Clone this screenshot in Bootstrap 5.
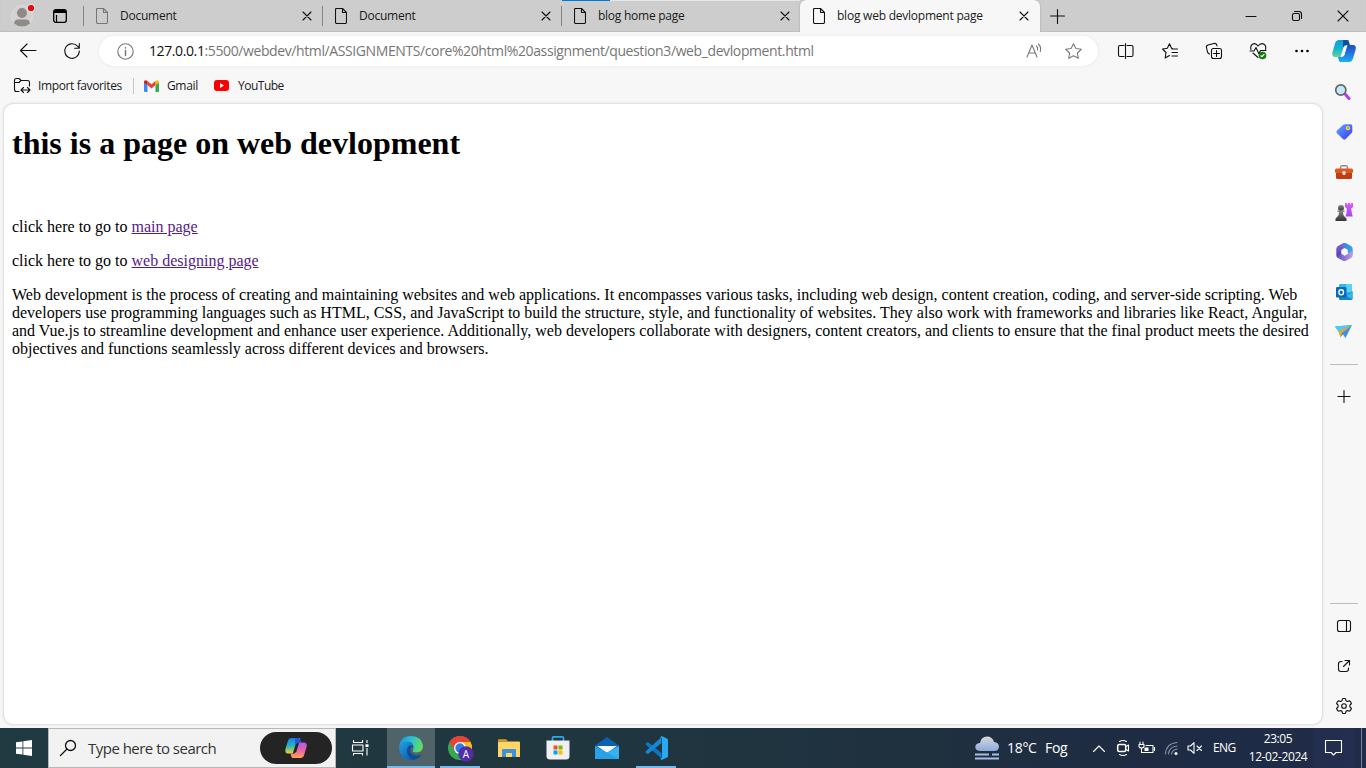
<!DOCTYPE html>
<html lang="en">
<head>
<meta charset="utf-8">
<meta name="viewport" content="width=device-width, initial-scale=1">
<title>blog web devlopment page</title>
<link href="https://cdn.jsdelivr.net/npm/bootstrap@5.3.0/dist/css/bootstrap.min.css" rel="stylesheet">
<style>
  body { background:#f7f7f7; font-family:"Open Sans","Noto Sans",sans-serif; font-size:12px; color:#1a1a1a; line-height:16px; }
  svg { display:block; flex:none; overflow:visible; }
  .ln { fill:none; stroke:#111; stroke-width:1.1; stroke-linecap:round; stroke-linejoin:round; }
  .grey { stroke:#777; }
  .white { stroke:#fff; }
  .dim { stroke:#8991a1; }
  .tabstrip { height:32px; background:#cdcdcd; box-shadow:inset 0 -1px 1px #bebebe; }
  .profile { width:44px; }
  .spaces { width:39px; padding-right:7px; }
  .tab { width:239px; padding-left:12px; padding-right:6px; border-left:1px solid #858585; height:20px; }
  .tab span { width:178px; margin-left:12px; }
  .tab-slot { width:239px; position:relative; }
  .tab-load { position:absolute; top:0; left:1px; width:238px; height:1px; background:linear-gradient(90deg,#0078d7 48px,#e6e6e6 48px); }
  .tab-on { width:240px; background:#f7f7f7; border-radius:6px 6px 0 0; padding-left:13px; padding-right:9px; box-shadow:0 0 2px #999; clip-path:inset(0 -3px 0 -3px); }
  .tab-on span { width:178px; margin-left:12px; }
  .tdoc,.thome,.tdev { white-space:nowrap; letter-spacing:-.25px; }
  .tdev { letter-spacing:-.23px; }
  .newtab { padding-left:11px; }
  .win { width:46px; }
  main { width:1322px; flex:none; }
  .toolbar { height:38px; }
  .addr { width:999px; height:30px; background:#fff; border-radius:15px; box-shadow:0 0 3px #e2e2e2; margin-left:7px; margin-right:6px; padding-left:18px; flex:none; }
  .url { font-size:14px; color:#767676; margin-left:15px; width:877px; letter-spacing:-.395px; line-height:20px; }
  .url b { font-weight:400; color:#111; }
  .star { margin-left:22px; }
  .b44 { width:44px; flex:none; }
  .favs { height:33px; padding-left:14px; padding-bottom:2px; }
  .vr1 { width:1px; height:16px; background:#c6c6c6; }
  .fav1 { width:95px; margin-left:8px; white-space:nowrap; letter-spacing:-.38px; }
  .gm { margin-left:10px; }
  .fav2 { width:47px; letter-spacing:-.35px; }
  .fav3 { margin-left:9px; letter-spacing:-.5px; }
  .sheet { width:1318px; height:620px; margin-left:4px; margin-top:1px; background:#fff; border-radius:9px; box-shadow:0 0 3px #bbb; padding:0 8px; font-family:"Liberation Serif",serif; font-size:16px; line-height:18px; color:#000; }
  .sheet h1 { font-size:32px; line-height:37px; font-weight:700; margin:21px 0 56px; }
  .sheet p { margin:0 0 16px; }
  .sheet a { color:#551a8b; }
  .side { width:44px; height:696px; }
  .side > div { height:40px; }
  .side > .first { padding-bottom:2px; }
  .side > .rule { width:28px; height:1px; background:#bdbdbd; margin:12px auto; }
  .side > .after { margin-top:2px; margin-bottom:0; }
  .side > .last { margin-bottom:2px; }
  .taskbar { height:40px; background:linear-gradient(90deg,#213941 0,#20373f 40%,#1f303f 68%,#1e2b43 85%,#202c4a 100%); color:#fff; }
  .start { width:48px; }
  .search { width:288px; height:40px; background:#f2f2f2; border:1px solid #b5b8ba; color:#333; font-size:15px; padding-left:11px; }
  .search span { width:172px; margin-left:12px; letter-spacing:-.52px; }
  .pill { width:72px; height:32px; background:#242424; border-radius:16px; }
  .app { width:48px; height:40px; margin-right:1px; }
  .run { box-shadow:inset 0 -2px #76b9ed; width:40px; margin-left:4px; margin-right:5px; }
  .cur { background:#506369; box-shadow:inset 0 -2px #76b9ed; margin-left:3px; }
  .tray { width:24px; }
  .wx { font-size:14px; letter-spacing:-.3px; }
  .wxt { width:38px; }
  .wxf { width:41px; }
  .chev { margin-left:1px; }
  .eng { width:30px; margin-left:6px; letter-spacing:-.6px; }
  .clock { width:70px; line-height:18px; text-align:center; letter-spacing:-.4px; }
  .bell { width:40px; height:40px; background:#28335a66; }
  .edge { width:13px; height:40px; background:linear-gradient(90deg,transparent 8px,#76809a 8px,#76809a 9px,transparent 9px); }
</style>
</head>
<body class="vh-100 overflow-hidden">
<svg width="0" height="0" class="position-absolute">
  <defs>
    <symbol id="page" viewBox="0 0 12 16"><path d="M1.500.5H7.500L11.500 4.500V14.200Q11.500 15.500 10.200 15.500H1.800Q.5 15.500.5 14.200V1.500Q.5.5 1.500.5ZM7.500.5V4.500H11.500"/></symbol>
    <symbol id="x" viewBox="0 0 10 10"><path d="M1 1L9 9M9 1L1 9"/></symbol>
    <linearGradient id="cpA" x1="0" y1="0" x2="0" y2="1"><stop offset="0" stop-color="#149bd8"/><stop offset=".5" stop-color="#13b5cf"/><stop offset="1" stop-color="#5ed59a"/></linearGradient>
    <linearGradient id="cpB" x1="0" y1="0" x2="0" y2="1"><stop offset="0" stop-color="#1b4fc4"/><stop offset=".5" stop-color="#2475e0"/><stop offset="1" stop-color="#18b4f2"/></linearGradient>
    <linearGradient id="cpC" x1="0" y1="0" x2="0" y2="1"><stop offset="0" stop-color="#1c7cf0"/><stop offset=".5" stop-color="#25b5c0"/><stop offset="1" stop-color="#f3d02f"/></linearGradient>
    <linearGradient id="cpD" x1="0" y1="0" x2="0" y2="1"><stop offset="0" stop-color="#a65ceb"/><stop offset=".5" stop-color="#ef5fa5"/><stop offset="1" stop-color="#ffa35a"/></linearGradient>
    <linearGradient id="tagG" x1="0" y1="0" x2="1" y2="1"><stop offset="0" stop-color="#62aaff"/><stop offset="1" stop-color="#3838ee"/></linearGradient>
    <linearGradient id="pawn" x1="0" y1="0" x2="0" y2="1"><stop offset="0" stop-color="#888"/><stop offset="1" stop-color="#333"/></linearGradient>
    <linearGradient id="rook" x1="0" y1="0" x2="0" y2="1"><stop offset="0" stop-color="#d957ff"/><stop offset="1" stop-color="#a448ed"/></linearGradient>
    <linearGradient id="eg" x1="0" y1=".2" x2="1" y2=".4"><stop offset="0" stop-color="#1a8fdd"/><stop offset=".5" stop-color="#2bc0d4"/><stop offset="1" stop-color="#62e05a"/></linearGradient>
    <linearGradient id="eb" x1="0" y1="0" x2="1" y2="1"><stop offset="0" stop-color="#1fa2e8"/><stop offset="1" stop-color="#0c4fa3"/></linearGradient>
    <linearGradient id="cl" x1="0" y1="0" x2="0" y2="1"><stop offset="0" stop-color="#d5d8de"/><stop offset="1" stop-color="#8faadc"/></linearGradient>
    <linearGradient id="mA" x1="0" y1="0" x2="0" y2="1"><stop offset="0" stop-color="#8a63d6"/><stop offset="1" stop-color="#4a3fae"/></linearGradient>
    <linearGradient id="mB" x1="0" y1="0" x2="1" y2="1"><stop offset="0" stop-color="#3f7be0"/><stop offset="1" stop-color="#35b4e8"/></linearGradient>
    <linearGradient id="mC" x1="0" y1="0" x2="1" y2="0"><stop offset="0" stop-color="#5d4fc0"/><stop offset="1" stop-color="#c59be8"/></linearGradient>
  </defs>
</svg>

<header class="tabstrip d-flex">
  <div class="profile d-flex align-items-center justify-content-center">
    <svg width="22" height="22" viewBox="0 0 22 22"><circle cx="11" cy="11" r="10.500" fill="#d4d2d0" stroke="#dedbd8"/><circle cx="11" cy="8" r="5" fill="#8d8a87"/><path d="M3 18.500Q3.500 14.500 7 14.500H15Q18.500 14.500 19 18.500Q15.500 21.500 11 21.500Q6.500 21.500 3 18.500Z" fill="#8d8a87"/><circle cx="20" cy="3" r="4" fill="#dedede"/><circle cx="20" cy="3" r="3.100" fill="#e00b0b"/></svg>
  </div>
  <div class="spaces d-flex align-items-center justify-content-center">
    <svg width="14" height="14" viewBox="0 0 14 14"><rect x=".7" y=".7" width="12.600" height="12.600" rx="2" fill="none" stroke="#000" stroke-width="1.300"/><path d="M1 2.500Q1 1 2.500 1H11.500Q13 1 13 2.500V4H1Z"/><path d="M3.500 6V13" stroke="#000" stroke-width="1.200"/></svg>
  </div>
  <div class="tab-slot d-flex align-items-center"><div class="tab d-flex align-items-center"><svg width="12" height="16" class="ln grey"><use href="#page"/></svg><span class="tdoc">Document</span><svg width="10" height="10" class="ln ms-auto me-1"><use href="#x"/></svg></div></div>
  <div class="tab-slot d-flex align-items-center"><div class="tab d-flex align-items-center"><svg width="12" height="16" class="ln"><use href="#page"/></svg><span class="tdoc">Document</span><svg width="10" height="10" class="ln ms-auto me-1"><use href="#x"/></svg></div></div>
  <div class="tab-slot d-flex align-items-center"><div class="tab-load"></div><div class="tab d-flex align-items-center"><svg width="12" height="16" class="ln"><use href="#page"/></svg><span class="thome">blog home page</span><svg width="10" height="10" class="ln ms-auto me-1"><use href="#x"/></svg></div></div>
  <div class="tab-on d-flex align-items-center"><svg width="12" height="16" class="ln"><use href="#page"/></svg><span class="tdev">blog web devlopment page</span><svg width="10" height="10" class="ln ms-1"><use href="#x"/></svg></div>
  <div class="newtab d-flex align-items-center"><svg width="13" height="13" class="ln"><path d="M6.500-.5V13.500M-.5 6H13.500"/></svg></div>
  <div class="win ms-auto d-flex align-items-center justify-content-center"><svg width="10" height="10" class="ln"><path d="M0 5.500H10"/></svg></div>
  <div class="win d-flex align-items-center justify-content-center"><svg width="10" height="10" class="ln"><rect x=".5" y="2.500" width="7" height="7" rx="1.500"/><path d="M2.500.5H7Q9.500.5 9.500 3V7.500"/></svg></div>
  <div class="win d-flex align-items-center justify-content-center"><svg width="10" height="10" class="ln"><path d="M0 0L10 10M10 0L0 10"/></svg></div>
</header>

<div class="d-flex">
<main>
  <div class="toolbar d-flex align-items-center">
    <div class="b44 ms-1 ps-1 d-flex justify-content-center"><svg width="16" height="14" class="ln"><path d="M.5 6.500H16M7 0L.5 6.500L7 13"/></svg></div>
    <div class="b44 ps-1 d-flex justify-content-center"><svg width="16" height="16" class="ln"><path d="M15.300 8A7.300 7.300 0 1 1 13.500 3.200L15.300 5M15.300.5V5.200H10.600"/></svg></div>
    <div class="addr d-flex align-items-center">
      <svg width="17" height="17" class="ln grey"><circle cx="8.500" cy="8.500" r="7.700"/><path d="M8.500 7.500V12.500M8.500 4.700V5" stroke-width="1.500"/></svg>
      <div class="url text-nowrap"><b>127.0.0.1</b>:5500/webdev/html/ASSIGNMENTS/core%20html%20assignment/question3/web_devlopment.html</div>
      <svg width="17" height="16" class="ln grey"><path d="M1 14L6 2L11 14M2.700 10H9.300M10.500 3Q12 4.500 11.500 7M12.500 1Q15.500 4 14.300 8.500"/></svg>
      <svg width="17" height="16" class="ln grey star"><path d="M8.500.7L10.900 5.500L16.300 6.300L12.400 10L13.300 15.300L8.500 12.800L3.700 15.300L4.600 10L.7 6.300L6.100 5.500Z"/></svg>
    </div>
    <div class="b44 d-flex justify-content-center"><svg width="16" height="16" class="ln"><path d="M6 2.500H2Q.5 2.500.5 4V12Q.5 13.500 2 13.500H6M9 2.500H13.500Q15 2.500 15 4V12Q15 13.500 13.500 13.500H9M7.500.5V15.500"/></svg></div>
    <div class="b44 d-flex justify-content-center"><svg width="16" height="16" class="ln"><path d="M10.500 5.500L9.500 5.200L7.500.7L5.300 5.300L.5 6L4 9.500L3.200 15L7.500 12.500M10 6H15.500M10 9.500H15.500M10 13H15.500"/></svg></div>
    <div class="b44 d-flex justify-content-center"><svg width="16" height="16" class="ln"><rect x="5.500" y="5.500" width="10" height="10" rx="2"/><path d="M10.500 7.500V13.500M7.500 10.500H13.500M3.500 11Q2 10.500 1.500 9L.5 4.500Q0 2.500 2 2L8 .5Q10.200 0 10.800 2L11 3"/></svg></div>
    <div class="b44 d-flex justify-content-center"><svg width="17" height="16" class="ln"><path d="M8 3Q5.500-.5 2.500 1.300Q0 3 1 6.500M8 3Q11-.5 14 1.300Q16.500 3 15.500 6.500M0 8H4L6 4.500L9 11L10.500 7.500H16M3 10L8 14.500"/><circle cx="12.500" cy="12.500" r="3.800" fill="#107c10" stroke="none"/><path d="M10.900 12.800L12.100 13.700L14.100 11.300" class="white"/></svg></div>
    <div class="b44 d-flex justify-content-center"><svg width="14" height="4"><circle cx="1.500" cy="2" r="1.300"/><circle cx="7" cy="2" r="1.300"/><circle cx="12.500" cy="2" r="1.300"/></svg></div>
  </div>
  <div class="favs d-flex align-items-center">
    <svg width="16" height="15" class="ln"><path d="M5 13.500H2.500Q.5 13.500.5 11.500V2.500Q.5.5 2.500.5H5L7 2.500H13.500Q15.500 2.500 15.500 4.500V8M.5 4.500H5L7 2.500M7.500 12H15.500M9.500 9.500L7 12L9.500 14.500M13.500 9.500L16 12L13.500 14.500"/></svg>
    <span class="fav1">Import favorites</span><div class="vr1"></div>
    <svg width="15" height="12" class="gm"><path d="M0 2V11Q0 12 1 12H3.500V4Z" fill="#4285f4"/><path d="M11.500 4V12H14Q15 12 15 11V2Z" fill="#34a853"/><path d="M11.500 1.200V5L15 3V1.500Q14-.7 11.500 1.200" fill="#fbbc04"/><path d="M3.500 1L7.500 4.200L11.500 1V5L7.500 8.500L3.500 5Z" fill="#ea4335"/><path d="M0 3V1.500Q1-.7 3.500 1V5Z" fill="#c5221f"/></svg>
    <span class="fav2 ms-2">Gmail</span>
    <svg width="15" height="11"><rect width="15" height="11" rx="3" fill="#f00"/><path d="M6 3L10 5.500L6 8Z" fill="#fff"/></svg>
    <span class="fav3">YouTube</span>
  </div>
  <article class="sheet overflow-hidden">
    <h1>this is a page on web devlopment</h1>
    <p>click here to go to <a href="#">main page</a></p>
    <p>click here to go to <a href="#">web designing page</a></p>
    <p class="text-nowrap">Web development is the process of creating and maintaining websites and web applications. It encompasses various tasks, including web design, content creation, coding, and server-side scripting. Web<br>developers use programming languages such as HTML, CSS, and JavaScript to build the structure, style, and functionality of websites. They also work with frameworks and libraries like React, Angular,<br>and Vue.js to streamline development and enhance user experience. Additionally, web developers collaborate with designers, content creators, and clients to ensure that the final product meets the desired<br>objectives and functions seamlessly across different devices and browsers.</p>
  </article>
</main>

<aside class="side d-flex flex-column">
  <div class="first d-flex align-items-center justify-content-center"><svg width="24" height="22" viewBox="0 0 24 22"><path d="M11 0H17L15.500 4.500L12.500 15Q12 17 10 17H3Q0 17 .2 13L3 3.500Q4 0 7 0Z" fill="url(#cpA)"/><path d="M11 0H14Q16.500 0 17.300 3L18 5H14Q11.500 5 11 8Z" fill="#154b9c"/><path d="M14 5H21Q24.300 5 23.800 9L21 18.500Q20 22 17 22H8Q7 22 6.500 19L6 17H9.500Q12 17 12.800 14Z" fill="url(#cpB)"/><path d="M11.500 7.500Q12.500 5 15.500 5L12.500 14.500Q11.500 17 8.500 17Z" fill="#fff"/></svg></div>
  <div class="pe-1 d-flex align-items-center justify-content-center"><svg width="14" height="17"><path d="M10.500 10.500L14 14.500" stroke="#b63bea" stroke-width="3" stroke-linecap="round"/><circle cx="5.800" cy="6" r="5.100" fill="#c7e7fa" stroke="#666" stroke-width="1.700"/></svg></div>
  <div class="d-flex align-items-center justify-content-center"><svg width="17" height="16"><path d="M9 .3H14.500Q16.300.3 16.300 2V7.500Q16.300 8.200 15.600 9L9.700 15Q8.300 16.300 7 15L1 9.300Q-.5 8 1 6.500L7 1Q8 .3 9 .3Z" fill="url(#tagG)"/><circle cx="12" cy="4.200" r="2.100" fill="#ffd75b"/><circle cx="12.200" cy="4" r=".9" fill="#c88712"/></svg></div>
  <div class="d-flex align-items-center justify-content-center"><svg width="18" height="14"><path d="M5.500 4V2.500Q5.500.7 7 .7H11Q12.500.7 12.500 2.500V4" fill="none" stroke="#8b8b8b" stroke-width="1.500"/><rect x="1" y="4" width="16" height="10" rx="1.500" fill="#c03c12"/><path d="M0 5Q0 3.500 1.500 3.500H16.500Q18 3.500 18 5V7Q18 8 16.500 8H1.500Q0 8 0 7Z" fill="#e2561f"/><rect x="7.300" y="6" width="3.400" height="4" rx="1.300" fill="#d7dbdd"/></svg></div>
  <div class="d-flex align-items-center justify-content-center"><svg width="18" height="18"><path d="M10 0H11.700V1.500H12.900V0H14.900V1.500H16.200V0H18V4L16.200 5.500L17 11L17.800 13.500H10.500L11.500 10L11.800 5.500L10 4Z" fill="url(#rook)"/><circle cx="6" cy="5" r="3" fill="url(#pawn)"/><path d="M2.500 7.500H9.500V9H8Q8 12.500 9.500 13.500L11.500 15.500V18H.5V15.500L2.500 13.500Q4 12.500 4 9H2.500Z" fill="url(#pawn)"/></svg></div>
  <div class="d-flex align-items-center justify-content-center"><svg width="17" height="18"><path d="M8.500 0L6.500.5L2 3Q.3 4 .3 6V12Q.3 14 2 14.500L5.500 13V7.500L8.500 5L10 1Z" fill="url(#mA)"/><path d="M7 .3Q8.500-.3 10 .3L15 3Q16.700 4 16.700 6V12L11.500 9.500V7L7.500 5Q6 3 7 .3Z" fill="url(#mB)"/><path d="M1 13.500L5.500 11V10L8.500 12.500L16.700 8V12Q16.700 14 15 15L10 17.700Q8.500 18.300 7 17.700L2 15Q1 14.500.5 13.200Z" fill="url(#mC)"/><path d="M8.500 5L11.500 6.800V10.700L8.500 12.700L5.500 10.700V6.800Z" fill="#f7f7f7"/></svg></div>
  <div class="d-flex align-items-center justify-content-center"><svg width="17" height="16"><rect x="3" y="0" width="13" height="12" rx="1" fill="#32b8ed"/><path d="M10 0H15Q16 0 16 1V8H10Z" fill="#59d3f5"/><path d="M3 15V8L10 11L16.500 7V15Q16.500 16 15.500 16H4Q3 16 3 15Z" fill="#1686ce"/><path d="M10 12L16.500 7.500V15Z" fill="#37b7eb"/><rect x="0" y="3" width="10.500" height="10.500" rx="1.200" fill="#0869ba"/><ellipse cx="5.200" cy="8.300" rx="2.300" ry="2.600" fill="none" stroke="#fff" stroke-width="1.400"/></svg></div>
  <div class="d-flex align-items-center justify-content-center"><svg width="18" height="14"><path d="M0 1.500L17 0L10.500 13L8 9.500L5.500 12L4 7Z" fill="#3a91ea"/><path d="M0 1.500L17 0L4 7Z" fill="#53c9ee"/><path d="M3.500 6.500L17 .2L7 8L5.500 12.500Z" fill="#f0a51d"/></svg></div>
  <div class="rule"></div>
  <div class="pe-1 d-flex align-items-center justify-content-center"><svg width="11" height="12" class="ln"><path d="M7-.5V11.500M1 5.500H13"/></svg></div>
  <div class="rule mt-auto mb-0"></div>
  <div class="after d-flex align-items-center justify-content-center"><svg width="14" height="12" class="ln"><rect x=".5" y=".5" width="13" height="11" rx="2"/><path d="M9.500.5V11.500"/></svg></div>
  <div class="d-flex align-items-center justify-content-center"><svg width="12" height="12" class="ln"><path d="M4 1.500H3Q.5 1.500.5 4V9Q.5 11.500 3 11.500H8Q10.500 11.500 10.500 9V8M7 .5H11.500V5M11.500.5L5.500 6.500"/></svg></div>
  <div class="last d-flex align-items-center justify-content-center"><svg width="16" height="16" class="ln"><circle cx="8" cy="8" r="2.300"/><path d="M6.500.7Q8 .2 9.500.7L10 2.700Q11 3.500 12 3.300L13.700 2.900Q15 4 15.400 5.500L14 7Q13.600 8 14 9L15.400 10.500Q15 12 13.700 13.100L12 12.700Q11 12.500 10 13.300L9.500 15.300Q8 15.800 6.500 15.300L6 13.300Q5 12.500 4 12.700L2.300 13.100Q1 12 .6 10.500L2 9Q2.400 8 2 7L.6 5.500Q1 4 2.300 2.900L4 3.300Q5 3.500 6 2.700Z"/></svg></div>
</aside>
</div>

<footer class="taskbar d-flex align-items-center">
  <div class="start d-flex justify-content-center"><svg width="16" height="16" fill="#fff"><path d="M0 2.300L6.500 1.400V7.500H0ZM7.300 1.300L16 0V7.500H7.300ZM0 8.400H6.500V14.600L0 13.700ZM7.300 8.400H16V16L7.300 14.700Z"/></svg></div>
  <div class="search d-flex align-items-center"><svg width="16" height="16" class="ln"><circle cx="10.500" cy="5.500" r="5" stroke-width="1.300"/><path d="M7 9L.5 15.500" stroke-width="1.300"/></svg><span class="text-nowrap">Type here to search</span>
    <div class="pill d-flex align-items-center justify-content-center"><svg width="22" height="20" viewBox="0 0 24 22"><path d="M11 0H17L15.500 4.500L12.500 15Q12 17 10 17H3Q0 17 .2 13L3 3.500Q4 0 7 0Z" fill="url(#cpC)"/><path d="M11 0H14Q16.500 0 17.300 3L18 5H14Q11.500 5 11 8Z" fill="#2057d8"/><path d="M14 5H21Q24.300 5 23.800 9L21 18.500Q20 22 17 22H8Q7 22 6.500 19L6 17H9.500Q12 17 12.800 14Z" fill="url(#cpD)"/><path d="M11.500 7.500Q12.500 5 15.500 5L12.500 14.500Q11.500 17 8.500 17Z" fill="#242424"/></svg></div>
  </div>
  <div class="app me-0 d-flex align-items-center justify-content-center"><svg width="17" height="16" class="ln white"><path d="M1.500 0V2.500H10.500V0M.5 5H11V11H.5ZM1.500 15.500V13.500H10.500V15.500M15 0V3M15 8V15.500" stroke-linecap="butt"/><rect x="13.500" y="4.300" width="3" height="2.700" fill="#fff" stroke="none"/></svg></div>
  <div class="app cur d-flex align-items-center justify-content-center"><svg width="24" height="24"><path d="M.1 11Q1 0 12 0Q22.500.3 24 9.500Q24 16.500 17 16.500Q13 16.500 14 14Q16 10 12 6.500Q6 3.500.1 11Z" fill="url(#eg)"/><path d="M0 12Q1.500 5.500 8 5.500Q13.500 5.500 14.500 10Q9 9 8.500 14Q9 22.500 17.500 23Q14 24.500 11 24Q1 23 0 12Z" fill="url(#eb)"/><path d="M8.200 12.500Q6.500 20 14 23.500Q19.500 23.500 22.500 18.500Q18 20.500 14 18.500Q10.500 16.500 11.500 12.500Q12 10.500 14.500 11Q13 8.500 10.500 9.500Q8.800 10.500 8.200 12.500Z" fill="#124c98"/></svg></div>
  <div class="app run d-flex align-items-center justify-content-center"><svg width="26" height="26" viewBox="-1 -1 26 26"><circle cx="12" cy="12" r="12" fill="#34a853"/><path d="M12 12V6H22.500Q25 11 23.500 16Q20.500 24 11.500 24L17 15Z" fill="#fbc116"/><path d="M1.500 6Q5 0 12 0Q19.500 0 22.500 6H12L6.800 15Z" fill="#ea4335"/><circle cx="12" cy="12" r="6" fill="#fff"/><circle cx="12" cy="12" r="4.700" fill="#327bea"/><circle cx="18" cy="18" r="7.700" fill="#512da8"/><text x="18" y="21.500" fill="#fff" font-size="10" text-anchor="middle">A</text></svg></div>
  <div class="app d-flex align-items-center justify-content-center"><svg width="22" height="19"><path d="M0 1Q0 .3 1 .3H8L10 2.300H0Z" fill="#dca008"/><path d="M0 2.500H21Q22 2.500 22 3.500V18H0Z" fill="#ffd568"/><path d="M4 18V11Q4 10 5 10H17Q18 10 18 11V18H14V14H8V18Z" fill="#3b91db"/></svg></div>
  <div class="app d-flex align-items-center justify-content-center"><svg width="24" height="24"><path d="M6.500 5V2Q6.500.8 7.800.8H16.200Q17.500.8 17.500 2V5" fill="none" stroke="#29aee6" stroke-width="1.700"/><path d="M.5 4.500H23.500V20Q23.500 23.500 20 23.500H4Q.5 23.500.5 20Z" fill="#f0f0f0"/><path d="M7.500 9.500H11.500V13.500H7.500Z" fill="#f25022"/><path d="M12.500 9.500H16.500V13.500H12.500Z" fill="#7fba00"/><path d="M7.500 14.500H11.500V18.500H7.500Z" fill="#00a4ef"/><path d="M12.500 14.500H16.500V18.500H12.500Z" fill="#ffb900"/></svg></div>
  <div class="app d-flex align-items-center justify-content-center"><svg width="24" height="22"><path d="M0 8.500L12 0L24 8.500V22H0Z" fill="#0961b3"/><path d="M2 9H22L12 16Z" fill="#f5f8fa"/><path d="M24 9L0 22H24Z" fill="#36b2f1"/><path d="M0 9L24 22H0Z" fill="#28a2e7"/></svg></div>
  <div class="app run d-flex align-items-center justify-content-center"><svg width="24" height="24"><path d="M2 7Q1 8 2 9L17.500 22.500V17L4 6Z" fill="#0879c5"/><path d="M2 17Q1 16 2 15L17.500 1V7L4 18Z" fill="#1688d2"/><path d="M17.500 0L23 2.500Q24 3 24 4V20Q24 21 23 21.500L17.500 24L16 22.500L18 22V2L16 1.500Z" fill="#29a9f2"/></svg></div>

  <div class="ms-auto d-flex align-items-center">
    <svg width="24" height="24"><path d="M5 15Q0 14.500.3 10.500Q1 7 5 7Q6 .5 12 .5Q17.500.5 19 6Q24 6.500 24 11Q23.500 15 19.500 15Z" fill="url(#cl)"/><path d="M0 18.500H14M17 18.500H24M0 22.500H24" stroke="#a7bde5" stroke-width="2"/></svg>
    <span class="wx wxt ms-2">18°C</span><span class="wx wxf">Fog</span>
    <div class="tray chev d-flex justify-content-center"><svg width="12" height="7" class="ln white"><path d="M.5 6.500L6 1L11.500 6.500"/></svg></div>
    <div class="tray d-flex justify-content-center"><svg width="12" height="16" class="ln white"><path d="M2.500 1.500Q6-.5 9.500 1.500M2.500 14.500Q6 16.500 9.500 14.500M9 6.500L11.500 5V11L9 9.500"/><rect x=".7" y="4.500" width="8" height="7" rx="1.500" stroke-width="1.500"/></svg></div>
    <div class="tray d-flex justify-content-center"><svg width="17" height="12" class="ln white"><path d="M1 0V2M4 0V2M0 2.500H5V4.500Q4.500 6 2.500 6Q.5 6 0 4.500ZM2.500 6V10.500H14V3.500H7"/><path d="M15.500 5.500V8.500"/><rect x="5.500" y="5.500" width="4" height="3.500" fill="#fff" stroke="none"/></svg></div>
    <div class="tray d-flex justify-content-center"><svg width="13" height="13" class="ln dim"><path d="M.5 12Q1 1.500 12 .5M3.500 12Q4 5 12 4M6.500 12Q7 8 12 7"/><circle cx="11" cy="11.500" r="1.500" fill="#fff" stroke="none"/></svg></div>
    <div class="tray d-flex justify-content-center"><svg width="15" height="12" class="ln white"><path d="M0 4H2.500L6 .7V11.300L2.500 8H0ZM9 4L13.500 8.500M13.500 4L9 8.500"/></svg></div>
    <span class="eng">ENG</span>
    <div class="clock">23:05<br>12-02-2024</div>
    <div class="bell d-flex align-items-center justify-content-center"><svg width="17" height="16" class="ln white"><path d="M.5.5H16.500V12.500H11L8.500 15L6 12.500H.5Z"/></svg></div>
    <div class="edge"></div>
  </div>
</footer>
<script src="https://cdn.jsdelivr.net/npm/bootstrap@5.3.0/dist/js/bootstrap.bundle.min.js"></script>
</body>
</html>
